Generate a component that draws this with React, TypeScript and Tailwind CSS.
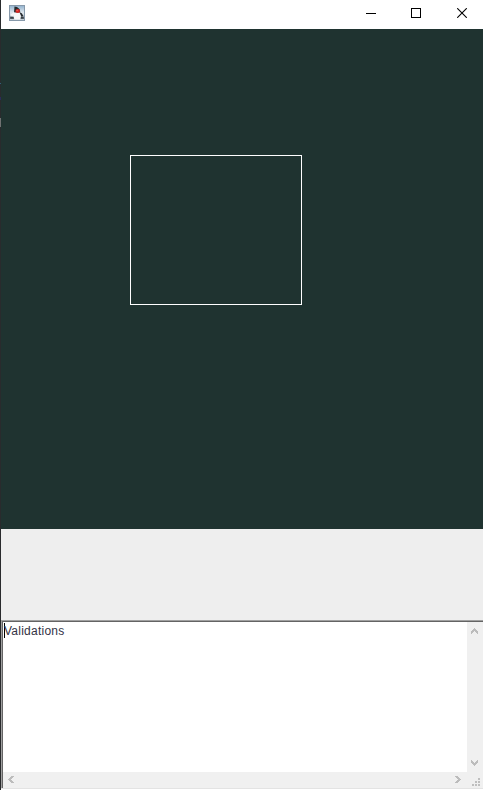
import React from "react";

function JavaIcon() {
  return (
    <svg width="16" height="16" viewBox="0 0 16 16">
      <defs>
        <linearGradient id="sky" x1="0" y1="0" x2="0" y2="1">
          <stop offset="0" stopColor="#8fb0cd" />
          <stop offset="0.45" stopColor="#dce5ec" />
          <stop offset="1" stopColor="#c1cbd3" />
        </linearGradient>
      </defs>
      <rect x="0.5" y="0.5" width="15" height="15" fill="url(#sky)" stroke="#8799aa" />
      <path d="M1 11.5h14V14H1z" fill="#626c74" />
      <path d="M1.5 9.5 5 7 6 9.5 3 11.5z" fill="#f5f6f7" />
      <path d="M5.5 1.5 8 2 10.5 4 11.5 8 9 8.5 5 7.5z" fill="#25292d" />
      <path d="M4.8 7.5h6l1 4-.5 3h-6l-.8-3z" fill="#f7f8f8" />
      <path d="M10.8 8h1.7l2 3-2 .7z" fill="#24282c" />
      <path d="M1.5 12h3v1.5h-3zM12 12h2.5v1.5H12z" fill="#394147" />
      <ellipse cx="8.7" cy="6" rx="2.3" ry="1.9" fill="#d62924" />
      <path d="M7.5 5h1.2v1H7.5z" fill="#f06b60" />
    </svg>
  );
}

function TitleBar() {
  return (
    <header className="flex h-[29px] shrink-0 items-start justify-between bg-white">
      <div className="pl-2 pt-[5px]">
        <JavaIcon />
      </div>
      <div className="flex text-black">
        <button aria-label="Minimize" className="flex h-[26px] w-[46px] items-center justify-center">
          <svg width="10" height="10" shapeRendering="crispEdges"><path d="M0 5h10v1H0z" /></svg>
        </button>
        <button aria-label="Maximize" className="flex h-[26px] w-11 items-center justify-center">
          <svg width="10" height="10" shapeRendering="crispEdges"><path d="M0 0h10v10H0zM1 1v8h8V1z" fillRule="evenodd" /></svg>
        </button>
        <button aria-label="Close" className="flex h-[26px] w-11 items-center justify-center pl-[4px]">
          <svg width="10" height="10"><path d="M.2.2 9.8 9.8M9.8.2.2 9.8" stroke="black" strokeWidth="1.1" /></svg>
        </button>
        <span className="w-px" />
      </div>
    </header>
  );
}

const arrows = {
  up: "M3 0h1v1h1v1h1v1h1v3H6V5H5V4H4V3H3v1H2v1H1v1H0V3h1V2h1V1h1z",
  down: "M0 0h1v1h1v1h1v1h1V2h1V1h1V0h1v3H6v1H5v1H4v1H3V5H2V4H1V3H0z",
  left: "M3 0h3v1H5v1H4v1H3v1h1v1h1v1h1v1H3V6H2V5H1V4H0V3h1V2h1V1h1z",
  right: "M0 0h3v1h1v1h1v1h1v1H5v1H4v1H3v1H0V6h1V5h1V4h1V3H2V2H1V1H0z",
};

function Chevron({ to }: { to: keyof typeof arrows }) {
  const vertical = to === "up" || to === "down";
  return (
    <svg width={vertical ? 7 : 6} height={vertical ? 6 : 7} shapeRendering="crispEdges" fill="#bcbcbc">
      <path d={arrows[to]} />
    </svg>
  );
}

export default function App() {
  return (
    <div className="flex h-[790px] w-[483px] overflow-hidden bg-[#eeeeee]">
      <div className="flex w-px shrink-0 flex-col bg-[#292b2d]">
        <div className="mt-[83px] h-px bg-[#315f79]" />
        <div className="mt-[13px] h-[3px] bg-[#2b2a58]" />
        <div className="mt-[18px] h-[9px] bg-[#707272]" />
      </div>
      <div className="flex w-[482px] shrink-0 flex-col">
        <TitleBar />
        <main className="h-[500px] shrink-0 bg-[#1f3330] pl-[129px] pt-[126px]">
          <div className="h-[150px] w-[172px] border border-white" />
        </main>
        <div className="h-[91px] shrink-0" />
        <section className="h-[168px] shrink-0 border-l border-t border-[#a0a0a0]">
          <div className="grid h-[167px] grid-cols-[464px_16px] grid-rows-[150px_16px] border-l border-t border-[#646464] bg-[#f0f0f0]">
            <div className="flex items-start bg-white pl-px pt-px">
              <span className="h-[15px] w-px bg-black" />
              <span className="-ml-px font-['Liberation_Sans',Arial,sans-serif] text-[12px] leading-[16px] tracking-[0.24px] text-[#333344]">Validations</span>
            </div>
            <div className="flex flex-col items-start justify-between py-[6px] pl-1">
              <Chevron to="up" />
              <Chevron to="down" />
            </div>
            <div className="flex items-start justify-between pl-[5px] pr-[6px] pt-1">
              <Chevron to="left" />
              <Chevron to="right" />
            </div>
            <svg width="16" height="16" fill="#bfbfbf" shapeRendering="crispEdges">
              <path d="M11 6h2v2h-2zM8 9h2v2H8zM11 9h2v2h-2zM5 12h2v2H5zM8 12h2v2H8zM11 12h2v2h-2z" />
            </svg>
          </div>
        </section>
        <div className="h-px shrink-0 bg-[#e3e3e3]" />
        <div className="h-px shrink-0 bg-white" />
      </div>
    </div>
  );
}
